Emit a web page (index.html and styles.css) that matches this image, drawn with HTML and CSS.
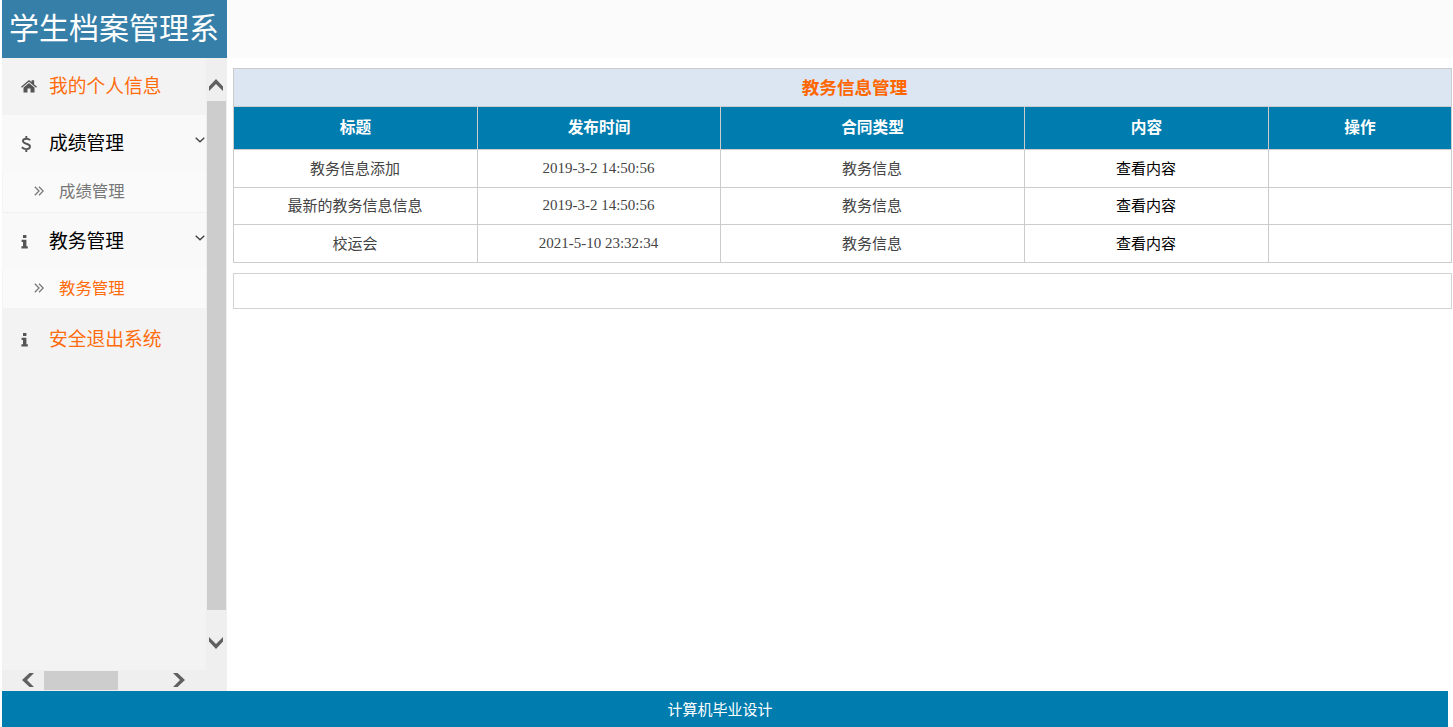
FILE: index.html
```html
<!DOCTYPE html>
<html lang="zh-CN">
<head>
<meta charset="utf-8">
<title>学生档案管理系统</title>
<link rel="stylesheet" href="styles.css">
</head>
<body>
<div class="page">
  <header class="header"><h1 class="logo">学生档案管理系</h1></header>
  <div class="body">
    <aside class="sidebar">
      <div class="sidebar-main">
        <nav class="menu">
          <a class="item accent home">
            <svg class="icon" viewBox="0 0 16 16"><path d="M0 7.700 8 .9l2.600 2.200V1.300h2.500v4L16 7.700l-.9 1L8 2.800.9 8.700z"/><path d="M2.500 8.500 8 4l5.500 4.500v5H9.500v-4h-3v4h-4z"/></svg>
            <span>我的个人信息</span>
          </a>
          <a class="item group">
            <svg class="icon" viewBox="0 0 16 16"><path d="M9.200 4.200C8.200 3.200 7 2.700 5.400 2.700C3.200 2.700 1.900 3.700 1.900 5.100C1.900 8.400 9 7.100 9 10.500C9 12.100 7.500 13.100 5.300 13.100C3.500 13.100 2 12.400 .8 11.300M5.300 0v3M5.300 13v3" fill="none" stroke="#555" stroke-width="1.900"/></svg>
            <span>成绩管理</span>
            <svg class="chev" viewBox="0 0 10 6"><path d="M.7.700 5 4.800 9.300.700"/></svg>
          </a>
          <a class="sub first">
            <svg class="angles" viewBox="0 0 10 10"><path d="M.8.800 5 5 .8 9.200M5 .8 9.200 5 5 9.200"/></svg>
            <span>成绩管理</span>
          </a>
          <a class="item group">
            <svg class="icon" viewBox="0 0 16 16"><path d="M2 1h3.400v3H2zM.6 5.800h4.800v6.400H6.800V14.500H.4v-2.300H2V8H.6z"/></svg>
            <span>教务管理</span>
            <svg class="chev" viewBox="0 0 10 6"><path d="M.7.700 5 4.800 9.300.700"/></svg>
          </a>
          <a class="sub accent">
            <svg class="angles" viewBox="0 0 10 10"><path d="M.8.800 5 5 .8 9.200M5 .8 9.200 5 5 9.200"/></svg>
            <span>教务管理</span>
          </a>
          <a class="item accent exit">
            <svg class="icon" viewBox="0 0 16 16"><path d="M2 1h3.400v3H2zM.6 5.800h4.800v6.400H6.800V14.500H.4v-2.300H2V8H.6z"/></svg>
            <span>安全退出系统</span>
          </a>
        </nav>
        <div class="vscroll">
          <svg class="arrow-v" viewBox="0 0 14 12"><path d="M0 7.500 7 0 14 7.500V12L7 5 0 12z"/></svg>
          <div class="thumb-v"></div>
          <svg class="arrow-v down" viewBox="0 0 14 12"><path d="M0 0 7 7 14 0v4.500L7 12 0 4.500z"/></svg>
        </div>
      </div>
      <div class="hscroll">
        <svg class="arrow-h" viewBox="0 0 12 14"><path d="M12 0H7.500L0 7l7.500 7H12L5 7z"/></svg>
        <div class="thumb-h"></div>
        <svg class="arrow-h" viewBox="0 0 12 14"><path d="M0 0h4.500L12 7l-7.500 7H0l7-7z"/></svg>
      </div>
    </aside>
    <main class="content">
      <table class="grid">
        <colgroup><col class="c-std"><col class="c-date"><col class="c-type"><col class="c-std"><col class="c-op"></colgroup>
        <tr class="title"><th colspan="5">教务信息管理</th></tr>
        <tr class="head"><th>标题</th><th>发布时间</th><th>合同类型</th><th>内容</th><th>操作</th></tr>
        <tr class="r1"><td>教务信息添加</td><td class="date">2019-3-2 14:50:56</td><td>教务信息</td><td class="link">查看内容</td><td></td></tr>
        <tr class="r2"><td>最新的教务信息信息</td><td class="date">2019-3-2 14:50:56</td><td>教务信息</td><td class="link">查看内容</td><td></td></tr>
        <tr class="r3"><td>校运会</td><td class="date">2021-5-10 23:32:34</td><td>教务信息</td><td class="link">查看内容</td><td></td></tr>
      </table>
      <div class="pager"></div>
    </main>
  </div>
  <footer class="footer">计算机毕业设计</footer>
</div>
</body>
</html>
```
FILE: styles.css
```css
* { box-sizing: border-box; }
body {
  margin: 0;
  background: #fff;
  overflow: hidden;
  font-family: "Liberation Sans", "Noto Sans CJK SC", sans-serif;
}
.page { display: flex; flex-direction: column; width: 1453px; height: 727px; padding-left: 2px; }
.header { height: 58px; background: #fbfbfb; }
.logo {
  width: 225px; height: 58px; margin: 0; padding-left: 7px;
  background: #367fa9; color: #fff;
  font-size: 30px; font-weight: 400; line-height: 58px; white-space: nowrap;
}
.body { display: flex; height: 633px; }
.sidebar { display: flex; flex-direction: column; width: 225px; background: #f3f3f3; }
.sidebar-main { display: flex; height: 612px; }
.menu { display: flex; flex-direction: column; width: 204px; }
.item { display: flex; align-items: center; padding: 2px 0 0 19px; font-size: 18.75px; line-height: 24px; color: #000; }
.item .icon { width: 16px; height: 16px; margin-right: 12px; fill: #555; }
.home { height: 57px; padding-top: 1px; }
.group { height: 56px; background: #f9f9f9; }
.exit { height: 62px; }
.chev { width: 10px; height: 6px; margin: -8px 0 0 71px; fill: none; stroke: #444; stroke-width: 1.4; }
.sub {
  display: flex; align-items: center; height: 39px; padding: 0 0 1px 31px;
  background: #fafafa; border-left: 1px solid #f4f4f4;
  font-size: 16.4px; line-height: 22px; color: #777;
}
.first { height: 42px; padding-bottom: 2px; border-bottom: 1px solid #f1f1f1; }
.angles { width: 10px; height: 10px; margin-right: 15px; fill: none; stroke: #777; stroke-width: 1.3; }
.accent { color: #ff6c0c; }
.vscroll { display: flex; flex-direction: column; align-items: flex-start; width: 21px; padding: 21px 0 0 1px; background: #efefef; }
.arrow-v { width: 14px; height: 12px; margin-left: 2px; fill: #606060; }
.thumb-v { width: 19px; height: 509px; margin-top: 10px; background: #cdcdcd; }
.down { margin-top: 27px; }
.hscroll { display: flex; align-items: center; height: 21px; padding: 0 0 2px 20px; background: #efefef; }
.arrow-h { width: 12px; height: 14px; fill: #606060; }
.thumb-h { width: 74px; height: 19px; margin: 1px 55px 0 10px; background: #cdcdcd; }
.content { flex: 1; padding: 10px 1px 0 6px; }
.grid { width: 1219px; border-collapse: collapse; table-layout: fixed; text-align: center; font-size: 15px; line-height: 20px; color: #444; }
.grid th, .grid td { padding: 0; border: 1px solid #ccc; }
.grid td { padding-right: 1px; }
.c-std { width: 244px; }
.c-date { width: 243px; }
.c-type { width: 304px; }
.c-op { width: 183px; }
.title { height: 38px; background: #dbe6f2; font-size: 17.6px; color: #ff6600; }
.grid .title th { padding-left: 24px; }
.head { height: 43px; background: #007cae; font-size: 15.7px; color: #fff; }
.r1, .r3 { height: 38px; }
.r2 { height: 37px; }
.grid .date { padding-bottom: 2px; font-family: "Liberation Serif", serif; }
.link { color: #000; }
.pager { height: 36px; margin-top: 10px; border: 1px solid #d2d2d2; }
.footer {
  width: 1446px; height: 36px; padding-right: 10px;
  background: #007cae; color: #fff;
  font-size: 15px; line-height: 37px; text-align: center;
}
```
